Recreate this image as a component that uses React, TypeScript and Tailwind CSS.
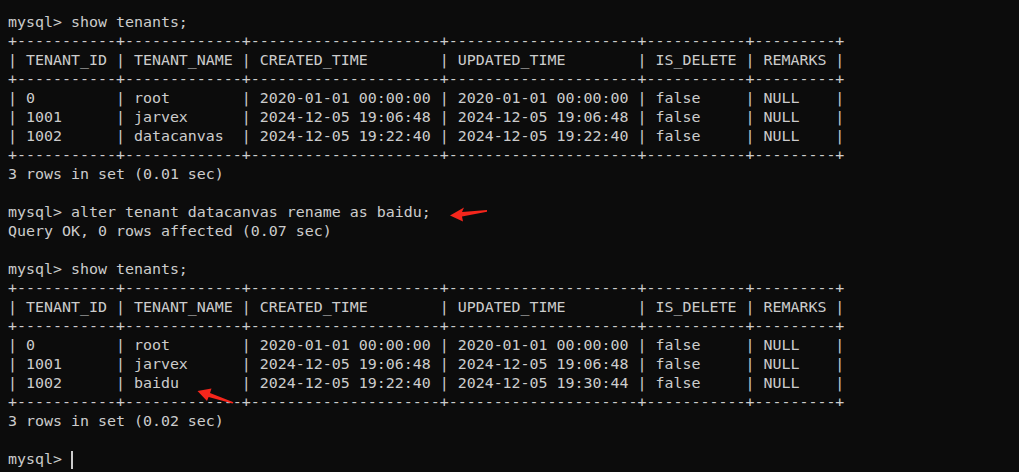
import React from 'react';

const border = '+-----------+-------------+---------------------+---------------------+-----------+---------+';
const header = '| TENANT_ID | TENANT_NAME | CREATED_TIME        | UPDATED_TIME        | IS_DELETE | REMARKS |';

const before = [
  '| 0         | root        | 2020-01-01 00:00:00 | 2020-01-01 00:00:00 | false     | NULL    |',
  '| 1001      | jarvex      | 2024-12-05 19:06:48 | 2024-12-05 19:06:48 | false     | NULL    |',
  '| 1002      | datacanvas  | 2024-12-05 19:22:40 | 2024-12-05 19:22:40 | false     | NULL    |',
];

const after = [
  '| 0         | root        | 2020-01-01 00:00:00 | 2020-01-01 00:00:00 | false     | NULL    |',
  '| 1001      | jarvex      | 2024-12-05 19:06:48 | 2024-12-05 19:06:48 | false     | NULL    |',
  '| 1002      | baidu       | 2024-12-05 19:22:40 | 2024-12-05 19:30:44 | false     | NULL    |',
];

const lines = [
  'mysql> show tenants;',
  border,
  header,
  border,
  ...before,
  border,
  '3 rows in set (0.01 sec)',
  '',
  'mysql> alter tenant datacanvas rename as baidu;',
  'Query OK, 0 rows affected (0.07 sec)',
  '',
  'mysql> show tenants;',
  border,
  header,
  border,
  ...after,
  border,
  '3 rows in set (0.02 sec)',
  '',
];

const App: React.FC = () => {
  return (
    <div className="relative w-[1019px] h-[472px] overflow-hidden bg-[#0c0c0c]">
      <pre
        className="pt-[13px] pl-2 text-[14.95px] leading-[19px] text-[#cccccc] whitespace-pre"
        style={{ fontFamily: '"DejaVu Sans Mono", "Liberation Mono", monospace' }}
      >
        {lines.map((l, i) => (
          <div key={i} className="h-[19px]">{l}</div>
        ))}
        <div className="h-[19px] flex items-center">
          <span>mysql&gt; </span>
          <span className="inline-block w-[2px] h-[18px] bg-[#cccccc]"></span>
        </div>
      </pre>

      {/* annotation arrows */}
      <svg className="absolute inset-0 pointer-events-none" width="1019" height="472" viewBox="0 0 1019 472">
        <polygon
          fill="#f5261c"
          points="450,215.5 464,207.5 462,212 487,210 487,211.8 462,216.5 463,221.5"
        />
        <polygon
          fill="#f5261c"
          points="197.5,391 211.5,388.5 210,393 233.5,402.3 232.5,403.6 208.6,397 207,401"
        />
      </svg>
    </div>
  );
};

export default App;
